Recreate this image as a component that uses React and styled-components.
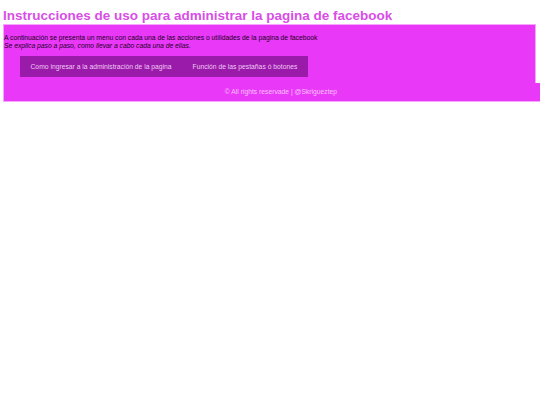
import React from 'react';
import styled, { createGlobalStyle } from 'styled-components';

const GlobalStyle = createGlobalStyle`
  body {
    margin: 0;
    padding: 0 0 0 3px;
    background: #fff;
    font-family: "Liberation Sans", Arial, sans-serif;
  }
`;

const Title = styled.h1`
  margin: 0;
  padding-top: 8px;
  height: 16px;
  font-size: 13.5px;
  line-height: 16px;
  font-weight: bold;
  color: #d84ee6;
`;

const Main = styled.div`
  width: 531px;
  background: #ea38f9;
  border: 1px solid #f3a6fb;
  border-bottom: none;
  padding: 9px 0 6px 0;
  font-size: 6.75px;
  line-height: 8px;
  color: #1a001c;
`;

const Intro = styled.p`
  margin: 0;
`;

const Nav = styled.nav`
  display: flex;
  width: max-content;
  margin: 6px 0 0 16px;
  background: #9a1aa9;
`;

const NavItem = styled.a`
  padding: 0 10.5px;
  height: 21px;
  line-height: 21px;
  font-size: 6.75px;
  color: #f1c8f5;
  text-decoration: none;
`;

const Footer = styled.footer`
  width: 537px;
  height: 19px;
  background: #ea38f9;
  border-left: 1px solid #f3a6fb;
  border-bottom: 1px solid #f3a6fb;
  padding-left: 18px;
  box-sizing: border-box;
  text-align: center;
  font-size: 6.75px;
  line-height: 18px;
  color: #f7c2fb;
`;

export default function App() {
  return (
    <>
      <GlobalStyle />
      <Title>Instrucciones de uso para administrar la pagina de facebook</Title>
      <Main>
        <Intro>A continuación se presenta un menu con cada una de las acciones o utilidades de la pagina de facebook</Intro>
        <Intro><em>Se explica paso a paso, como llevar a cabo cada una de ellas.</em></Intro>
        <Nav>
          <NavItem href="#">Como ingresar a la administración de la pagina</NavItem>
          <NavItem href="#">Función de las pestañas ó botones</NavItem>
        </Nav>
      </Main>
      <Footer>© All rights reservade | @Skrigueztep</Footer>
    </>
  );
}
